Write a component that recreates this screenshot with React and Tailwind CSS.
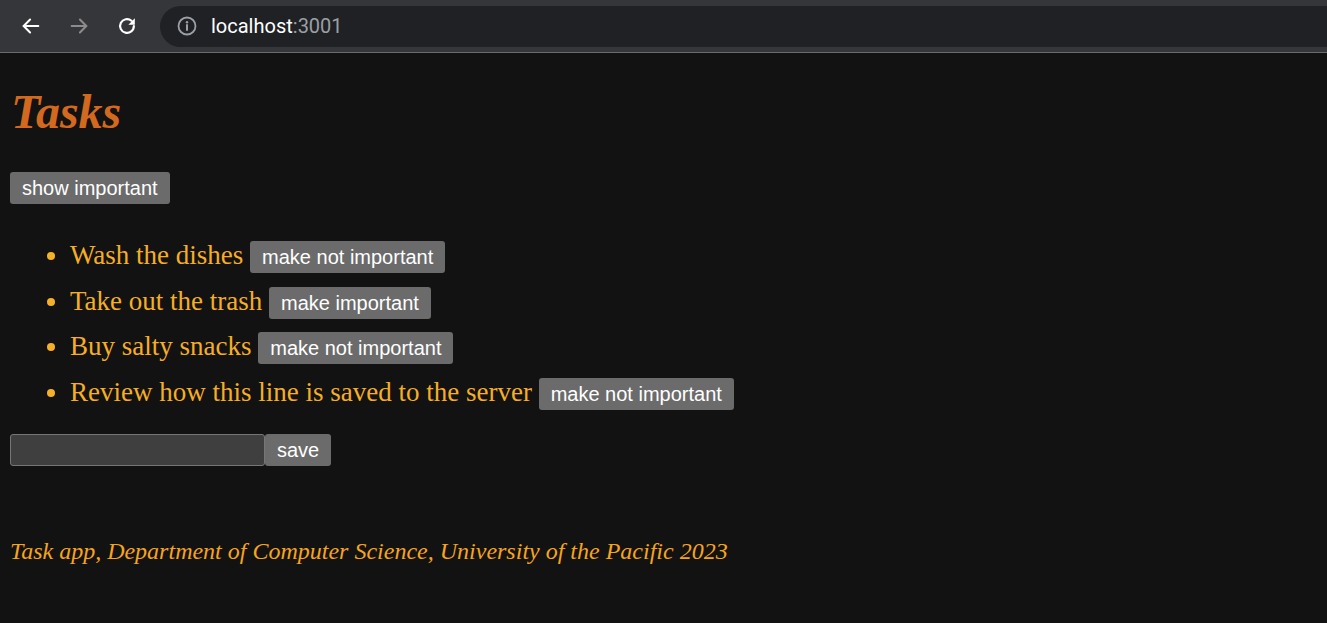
import React, { useState } from 'react';

const initialTasks = [
  { id: 1, text: 'Wash the dishes', important: true },
  { id: 2, text: 'Take out the trash', important: false },
  { id: 3, text: 'Buy salty snacks', important: true },
  { id: 4, text: 'Review how this line is saved to the server', important: true },
];

const btn =
  "bg-[#6b6b6b] text-white text-[20px] leading-[24px] px-3 py-1 rounded-[3px] font-['Liberation_Sans',Arial,sans-serif]";

// browser top bar
const BrowserBar = () => (
  <div className="h-[53px] bg-[#35363a] border-b border-[#6b6b6b] flex items-center">
    <div className="w-[160px] flex items-center shrink-0">
      <div className="w-[62px] flex justify-center">
        <svg width="22" height="22" viewBox="0 0 24 24" fill="none" stroke="#ffffff" strokeWidth="2.2" strokeLinecap="round" strokeLinejoin="round">
          <path d="M20 12H4" />
          <path d="M11 5l-7 7 7 7" />
        </svg>
      </div>
      <div className="w-[34px] flex justify-center">
        <svg width="22" height="22" viewBox="0 0 24 24" fill="none" stroke="#8c8c8c" strokeWidth="2.2" strokeLinecap="round" strokeLinejoin="round">
          <path d="M4 12h16" />
          <path d="M13 5l7 7-7 7" />
        </svg>
      </div>
      <div className="w-[62px] flex justify-center">
        <svg width="22" height="22" viewBox="0 0 24 24" fill="none">
          <path d="M19.5 12a7.5 7.5 0 1 1-2.6-5.7" stroke="#ffffff" strokeWidth="2.4" strokeLinecap="round" />
          <path d="M20.5 3.5v7h-7z" fill="#ffffff" />
        </svg>
      </div>
    </div>
    <div className="flex-1 h-[41px] bg-[#202124] rounded-l-full flex items-center pl-[17px] -mr-10">
      <svg width="20" height="20" viewBox="0 0 20 20" fill="none">
        <circle cx="10" cy="10" r="8.5" stroke="#9aa0a6" strokeWidth="1.8" />
        <path d="M10 9v5" stroke="#9aa0a6" strokeWidth="2" strokeLinecap="round" />
        <circle cx="10" cy="6.2" r="1.2" fill="#9aa0a6" />
      </svg>
      <span className="ml-[14px] text-[20px] font-['Roboto',sans-serif] text-white">
        localhost<span className="text-[#9aa0a6]">:3001</span>
      </span>
    </div>
  </div>
);

export default function App() {
  const [tasks, setTasks] = useState(initialTasks);
  const [onlyImportant, setOnlyImportant] = useState(false);
  const [draft, setDraft] = useState('');

  const toggle = (id) =>
    setTasks(tasks.map((t) => (t.id === id ? { ...t, important: !t.important } : t)));

  const save = () => {
    if (!draft.trim()) return;
    setTasks([...tasks, { id: Date.now(), text: draft, important: false }]);
    setDraft('');
  };

  const shown = onlyImportant ? tasks.filter((t) => t.important) : tasks;

  return (
    <div className="min-h-screen bg-[#121212]">
      <BrowserBar />
      <div className="px-[10px] font-['Liberation_Serif','Times_New_Roman',serif]">
        <h1 className="mt-[33px] text-[48px] leading-[52px] font-bold italic text-[#d2691e] pl-[1px]">
          Tasks
        </h1>

        <button className={`mt-[34px] ${btn}`} onClick={() => setOnlyImportant(!onlyImportant)}>
          {onlyImportant ? 'show all' : 'show important'}
        </button>

        <ul className="mt-[29px] list-disc pl-[60px] text-[#f5ae25] marker:text-[#f5b02a]">
          {shown.map((t) => (
            <li key={t.id} className="h-[45.5px] leading-[45.5px] text-[27px]">
              {t.text}{' '}
              <button className={`${btn} align-baseline`} onClick={() => toggle(t.id)}>
                {t.important ? 'make not important' : 'make important'}
              </button>
            </li>
          ))}
        </ul>

        <div className="mt-[19px] flex">
          <input
            value={draft}
            onChange={(e) => setDraft(e.target.value)}
            className="w-[255px] h-[32px] bg-[#3f3f3f] border border-[#767676] rounded-[3px] text-white px-1 text-[16px] outline-none"
          />
          <button className={`h-[32px] ${btn}`} onClick={save}>save</button>
        </div>

        <p className="mt-[72px] text-[24px] leading-[26px] italic text-[#f7a41c]">
          Task app, Department of Computer Science, University of the Pacific 2023
        </p>
      </div>
    </div>
  );
}
